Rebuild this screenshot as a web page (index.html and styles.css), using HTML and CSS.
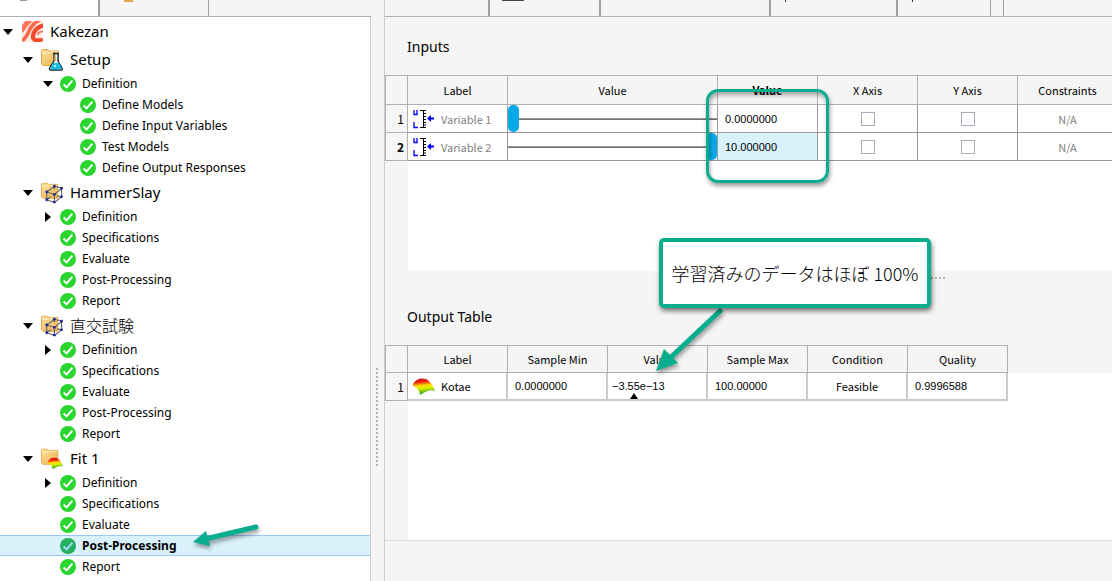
FILE: index.html
```html
<!DOCTYPE html>
<html lang="en">
<head>
<meta charset="utf-8">
<title>Kakezan</title>
<link rel="stylesheet" href="styles.css">
</head>
<body>
<svg class="defs" aria-hidden="true">
  <defs>
    <linearGradient id="gFolder" x1="0" y1="0" x2="1" y2="1"><stop offset="0" stop-color="#ffe2a0"/><stop offset="1" stop-color="#eab14a"/></linearGradient>
    <linearGradient id="gSurf" x1="0.4" y1="0" x2="0.55" y2="1"><stop offset="0" stop-color="#c81010"/><stop offset="0.2" stop-color="#f02010"/><stop offset="0.42" stop-color="#ffe000"/><stop offset="0.6" stop-color="#d0f000"/><stop offset="1" stop-color="#0c8a18"/></linearGradient>
    <clipPath id="rootClip"><rect width="20" height="20" rx="2"/></clipPath>
    <symbol id="down" viewBox="0 0 10 6"><path d="M0 0H10L5 6Z"/></symbol>
    <symbol id="right" viewBox="0 0 6 10"><path d="M0 0V10L6 5Z"/></symbol>
    <symbol id="check" viewBox="0 0 16 16"><circle cx="8" cy="8" r="8" fill="var(--disc)"/><path d="M3.6 8.6L6.6 11.4L12.4 4.6" fill="none" stroke="var(--tick)" stroke-width="2"/></symbol>
    <symbol id="folder" viewBox="0 0 22 22"><path d="M.5 3V1.500L2 .5H6.500L8 2H17.500V16.500H2L.5 15Z" fill="url(#gFolder)" stroke="#e0a64a"/><path d="M1 4H8L9.500 3H17" fill="none" stroke="#fff0c8"/></symbol>
    <symbol id="surface" viewBox="0 0 22 17"><path d="M0 6C3 1 8-.5 13 1C17 3 20 7 22 13C18 11 13 13 7 17C7 13 4 9 0 8Z" fill="url(#gSurf)"/></symbol>
    <symbol id="root" viewBox="0 0 20 20"><g clip-path="url(#rootClip)" fill="none"><rect width="20" height="20" fill="#ffe9e3"/><path d="M8-1Q3 3-1 10" stroke="#ff7358" stroke-width="4.500"/><path d="M17-1Q9 3 6 11Q4 16-1 20" stroke="#f9694c" stroke-width="3.500"/><path d="M21 4Q13 6 11 12Q9 18 14 18.500H21" stroke="#f4492c" stroke-width="4"/><path d="M21 10Q15 10 15 13" stroke="#f9694c" stroke-width="1.500"/></g></symbol>
    <symbol id="setup" viewBox="0 0 22 22"><use href="#folder"/><path d="M12 4.500H18M13 5V12L8.500 19Q8 21 10 21H20Q22 21 21 19L17 12V5" fill="#e9f2f4" stroke="#15242c" stroke-width="1.300"/><path d="M11.800 14H18L20.500 19Q21 20.500 19.500 20.500H11Q9 20.500 9.500 19Z" fill="#16bfe0"/><path d="M14 6V12" stroke="#c8a050" stroke-width="1.500"/><circle cx="14" cy="17" r="1" fill="#fff"/></symbol>
    <symbol id="doe" viewBox="0 0 23 22"><use href="#folder" width="22" height="22"/><path d="M6 10L14 4L22 6L14 12.500ZM6 10V18L14 21L21.500 15V6M14 12.500V21M14 4V7M6 18L10 15M21.500 15L17 14" fill="none" stroke="#66666f" stroke-width="1.200"/><g fill="#28289a"><circle cx="6" cy="10" r="1.500"/><circle cx="14" cy="4" r="1.500"/><circle cx="21.500" cy="6" r="1.500"/><circle cx="14" cy="12.500" r="1.500"/><circle cx="6" cy="18" r="1.500"/><circle cx="14" cy="20.500" r="1.500"/><circle cx="21.500" cy="15" r="1.500"/></g></symbol>
    <symbol id="fit" viewBox="0 0 23 22"><use href="#folder" width="22" height="22"/><use href="#surface" x="7" y="9" width="16" height="13"/></symbol>
    <symbol id="bounds" viewBox="0 0 22 20"><path d="M1 1V5.500H4V1M1 13V18.500H5" fill="none" stroke="#00f" stroke-width="1.300"/><path d="M7 1.500H13M7 18.500H13M10.500 1.500V18.500M10 4.500H13M10 7.500H13M10 10.500H13M10 13.500H13M10 16H13" fill="none" stroke="#000"/><path d="M14 9.500L18 6V8.500H21V10.500H18V13Z" fill="#00f"/></symbol>
  </defs>
</svg>
<div class="app">
  <aside class="side">
    <div class="tabs">
      <div class="tab on"><i class="mark grey"></i></div>
      <div class="tab files"><i class="mark gold"></i></div>
    </div>
    <nav class="tree" aria-label="Project">
      <div class="row group l0"><button class="tog" aria-label="Collapse Kakezan"><svg class="dn"><use href="#down"/></svg></button><svg class="rooticon"><use href="#root"/></svg><span>Kakezan</span></div>
      <div class="row group l1"><button class="tog" aria-label="Collapse Setup"><svg class="dn"><use href="#down"/></svg></button><svg class="gicon"><use href="#setup"/></svg><span>Setup</span></div>
      <div class="row l2"><button class="tog" aria-label="Collapse Definition"><svg class="dn"><use href="#down"/></svg></button><svg class="ok"><use href="#check"/></svg><span>Definition</span></div>
      <div class="row leaf l3"><svg class="ok"><use href="#check"/></svg><span>Define Models</span></div>
      <div class="row leaf l3"><svg class="ok"><use href="#check"/></svg><span>Define Input Variables</span></div>
      <div class="row leaf l3"><svg class="ok"><use href="#check"/></svg><span>Test Models</span></div>
      <div class="row leaf l3"><svg class="ok"><use href="#check"/></svg><span>Define Output Responses</span></div>

      <div class="row group l1"><button class="tog" aria-label="Collapse HammerSlay"><svg class="dn"><use href="#down"/></svg></button><svg class="gicon"><use href="#doe"/></svg><span>HammerSlay</span></div>
      <div class="row l2"><button class="tog" aria-label="Expand Definition"><svg class="rt"><use href="#right"/></svg></button><svg class="ok"><use href="#check"/></svg><span>Definition</span></div>
      <div class="row leaf l2"><svg class="ok"><use href="#check"/></svg><span>Specifications</span></div>
      <div class="row leaf l2"><svg class="ok"><use href="#check"/></svg><span>Evaluate</span></div>
      <div class="row leaf l2"><svg class="ok"><use href="#check"/></svg><span>Post-Processing</span></div>
      <div class="row leaf l2"><svg class="ok"><use href="#check"/></svg><span>Report</span></div>

      <div class="row group l1"><button class="tog" aria-label="Collapse 直交試験"><svg class="dn"><use href="#down"/></svg></button><svg class="gicon"><use href="#doe"/></svg><span lang="ja">直交試験</span></div>
      <div class="row l2"><button class="tog" aria-label="Expand Definition"><svg class="rt"><use href="#right"/></svg></button><svg class="ok"><use href="#check"/></svg><span>Definition</span></div>
      <div class="row leaf l2"><svg class="ok"><use href="#check"/></svg><span>Specifications</span></div>
      <div class="row leaf l2"><svg class="ok"><use href="#check"/></svg><span>Evaluate</span></div>
      <div class="row leaf l2"><svg class="ok"><use href="#check"/></svg><span>Post-Processing</span></div>
      <div class="row leaf l2"><svg class="ok"><use href="#check"/></svg><span>Report</span></div>

      <div class="row group l1"><button class="tog" aria-label="Collapse Fit 1"><svg class="dn"><use href="#down"/></svg></button><svg class="gicon"><use href="#fit"/></svg><span>Fit 1</span></div>
      <div class="row l2"><button class="tog" aria-label="Expand Definition"><svg class="rt"><use href="#right"/></svg></button><svg class="ok"><use href="#check"/></svg><span>Definition</span></div>
      <div class="row leaf l2"><svg class="ok"><use href="#check"/></svg><span>Specifications</span></div>
      <div class="row leaf l2"><svg class="ok"><use href="#check"/></svg><span>Evaluate</span></div>
      <div class="row leaf l2 selected"><svg class="ok"><use href="#check"/></svg><span>Post-Processing</span></div>
      <div class="row leaf l2"><svg class="ok"><use href="#check"/></svg><span>Report</span></div>
    </nav>
  </aside>
  <div class="splitter"><i class="vdots"></i></div>
  <main class="main">
    <div class="tabs">
      <div class="mtab w1"></div><div class="mtab w2"><i class="mark dark"></i></div><div class="mtab w3"></div><div class="mtab w4"><i class="mark dot"></i></div><div class="mtab w5"><i class="mark dot"></i></div><div class="mtab w6"></div>
    </div>
    <section class="panel inputs">
      <h2>Inputs</h2>
      <div class="body">
        <table class="grid">
          <colgroup><col class="c-num"><col class="c-label"><col class="c-slider"><col class="c"><col class="c"><col class="c"><col class="c"></colgroup>
          <thead><tr><th></th><th>Label</th><th>Value</th><th class="strong">Value</th><th>X Axis</th><th>Y Axis</th><th>Constraints</th></tr></thead>
          <tbody>
            <tr><th>1</th><td class="name dim"><div><svg class="vicon"><use href="#bounds"/></svg>Variable 1</div></td><td class="slide"><input type="range" min="0" max="10" value="0" aria-label="Variable 1 value"></td><td class="num">0.0000000</td><td><input type="checkbox" aria-label="Variable 1 X axis"></td><td><input type="checkbox" aria-label="Variable 1 Y axis"></td><td class="dim">N/A</td></tr>
            <tr><th class="strong">2</th><td class="name dim"><div><svg class="vicon"><use href="#bounds"/></svg>Variable 2</div></td><td class="slide"><input type="range" min="0" max="10" value="10" aria-label="Variable 2 value"></td><td class="num cur">10.000000</td><td><input type="checkbox" aria-label="Variable 2 X axis"></td><td><input type="checkbox" aria-label="Variable 2 Y axis"></td><td class="dim">N/A</td></tr>
          </tbody>
        </table>
      </div>
    </section>
    <div class="hsplit"><i class="hdots"></i></div>
    <section class="panel outputs">
      <h2>Output Table</h2>
      <div class="body">
        <table class="grid out">
          <colgroup><col class="c-num"><col class="c-label"><col class="c"><col class="c"><col class="c"><col class="c"><col class="c"></colgroup>
          <thead><tr><th></th><th>Label</th><th>Sample Min</th><th>Value</th><th>Sample Max</th><th>Condition</th><th>Quality</th></tr></thead>
          <tbody>
            <tr><th>1</th><td class="name"><div><svg class="sicon"><use href="#surface"/></svg>Kotae</div></td><td class="num">0.0000000</td><td class="num marked">−3.55e−13<svg class="pointer" viewBox="0 0 8 6"><path d="M0 6L4 0L8 6Z"/></svg></td><td class="num">100.00000</td><td>Feasible</td><td class="num">0.9996588</td></tr>
          </tbody>
        </table>
      </div>
    </section>
  </main>
  <div class="frame"></div>
  <svg class="arrow a1" viewBox="0 0 80 80"><path d="M69 7L18 55" stroke="#08ad8e" stroke-width="5" stroke-linecap="round"/><path d="M5 67L13 45L27 59Z" fill="#08ad8e"/></svg>
  <svg class="arrow a2" viewBox="0 0 80 40"><path d="M65 9L14 21" stroke="#08ad8e" stroke-width="5" stroke-linecap="round"/><path d="M2 24L15 13L19 28Z" fill="#08ad8e"/></svg>
  <div class="callout" lang="ja">学習済みのデータはほぼ 100%</div>
</div>
</body>
</html>
```

FILE: styles.css
```css
* { box-sizing: border-box; }
body { margin: 0; background: #f5f5f5; color: #000; font: 12px/20px "Noto Sans", "Noto Sans CJK JP", sans-serif; }
h2 { margin: 0; font-size: 14px; font-weight: 400; line-height: 20px; }
svg { display: block; flex: none; }
.defs { position: absolute; width: 0; height: 0; }
.app { position: relative; display: flex; min-height: 100vh; overflow: hidden; --teal: #08ad8e; }

.side { flex: 0 0 371px; display: flex; flex-direction: column; }
.tabs { display: flex; height: 17px; background: #f5f5f5; border-bottom: 1px solid #b0b0b0; }
.tab { width: 100px; border-right: 2px solid #a0a0a0; }
.tab.on { background: #fff; }
.tab.files { width: 109px; border-right-width: 1px; }
.mark { display: block; height: 1px; }
.mark.grey { width: 7px; margin-left: 20px; background: #999; }
.mark.gold { width: 9px; height: 2px; margin-left: 24px; background: #dfa64a; }
.mark.dark { width: 22px; margin-left: 12px; background: #444; }
.mark.dot { width: 1px; height: 2px; margin-left: 14px; background: #333; }

.tree { flex: 1; background: #fff; border-right: 1px solid #ccc; }
.row { --disc: #2bd52f; --tick: #fff; display: flex; align-items: center; height: 21px; gap: 6px; font-size: 12px; line-height: 21px; white-space: nowrap; }
.row.group { height: 28px; font-size: 15px; gap: 7px; padding-top: 1px; }
.row span:lang(ja) { font-family: "Noto Sans CJK JP", sans-serif; font-size: 16px; font-weight: 300; }
.l1 { padding-left: 20px; }
.l2 { padding-left: 40px; }
.leaf.l2 { padding-left: 60px; }
.leaf.l3 { padding-left: 80px; }
.tog { display: flex; flex: none; width: 20px; height: 16px; margin-right: -6px; padding: 0 0 0 3px; border: 0; background: none; align-items: center; }
.dn { width: 10px; height: 6px; }
.rt { width: 6px; height: 10px; margin-left: 2px; }
.ok { width: 16px; height: 16px; }
.rooticon { width: 21px; height: 21px; }
.gicon { width: 22px; height: 22px; }
.l0 .rooticon { margin-left: 1px; }
.row.selected { background: #d9f1fb; border: solid #99c9f5; border-width: 1px 0; font-weight: 700; --disc: #24b161; --tick: #a8d8f5; }

.splitter { flex: 0 0 13px; padding: 368px 0 0 5px; }
.vdots { display: block; width: 2px; height: 98px; background: repeating-linear-gradient(#b5b5a5 0 2px, #f5f5f5 2px 4px); }

.main { flex: 1; min-width: 0; border-left: 1px solid #ccc; }
.mtab { border-right: 2px solid #a0a0a0; flex: none; }
.w1 { width: 105px; }
.w2 { width: 111px; }
.w3 { width: 170px; }
.w4 { width: 127px; }
.w5 { width: 93px; border-right-width: 1px; }
.w6 { width: 13px; border-right-width: 1px; }
.panel h2 { padding: 20px 22px 18px; }
.body { --edge: linear-gradient(#f5f5f5, #f5f5f5); overflow: hidden; min-height: 196px; background: var(--edge) 0 0 / 23px 100% no-repeat, var(--edge) 0 0 / 100% 28px no-repeat, #fff; }
.inputs .body { border-top: 1px solid #b0b0b0; }
.outputs .body { border-bottom: 1px solid #ddd; }
.hsplit { height: 16px; padding: 6px 0 0 462px; }
.hdots { display: block; width: 100px; height: 2px; background: repeating-linear-gradient(90deg, #b5b5a5 0 2px, #f5f5f5 2px 4px); }

.grid { table-layout: fixed; width: 732px; border-collapse: separate; border-spacing: 0; border-left: 1px solid #b0b0b0; font-family: "Noto Sans CJK JP", sans-serif; font-size: 11px; }
.c-num { width: 22px; }
.c-label, .c { width: 100px; }
.c-slider { width: 210px; }
.grid th, .grid td { height: 28px; padding: 0; text-align: center; font-weight: 400; line-height: 16px; border-right: 1px solid #999; border-bottom: 1px solid #999; background: #fff; }
.grid th { background: #f5f5f5; border-color: #b0b0b0; }
.grid thead th { height: 29px; }
.grid tbody th { text-align: right; padding-right: 3px; font-size: 12px; }
.grid .strong { font-weight: 700; }
.grid .dim { color: #808080; }
.grid .num { text-align: left; padding-left: 7px; font-family: "Liberation Sans", sans-serif; }
.grid .cur { background: #d9f1fb; }
.name div { display: flex; align-items: center; gap: 6px; padding-left: 5px; }
.vicon { width: 22px; height: 20px; }
.sicon { width: 22px; height: 17px; }
.grid input { display: block; margin: 0 auto; appearance: none; }
input[type=checkbox] { width: 14px; height: 14px; background: #fff; border: 1px solid #a9afbc; }
input[type=range] { width: 100%; height: 27px; background: linear-gradient(#a8a8a8, #606060) center / 100% 2px no-repeat; }
input[type=range]::-webkit-slider-thumb { appearance: none; width: 11px; height: 27px; border-radius: 5px; background: #05a8e8; }

.grid.out { width: 623px; }
.grid.out thead th { height: 28px; border-top: 1px solid #b0b0b0; }
.grid.out tbody td { border-right: 2px solid #ccc; border-bottom: 2px solid #ccc; }
.grid.out .marked { position: relative; padding-left: 4px; }
.pointer { position: absolute; left: 22px; bottom: 0; width: 8px; height: 6px; }

.frame { position: absolute; left: 706px; top: 89px; width: 123px; height: 94px; border: 3px solid var(--teal); border-radius: 12px; box-shadow: 1px 3px 4px #0006, inset 1px 3px 4px #0005; }
.callout { position: absolute; left: 659px; top: 238px; width: 272px; height: 70px; display: flex; align-items: center; justify-content: center; border: 4px solid var(--teal); border-radius: 5px; background: #fff; box-shadow: 1px 3px 5px #0008; font: 300 18px/24px "Noto Sans CJK JP", sans-serif; white-space: nowrap; }
.arrow { position: absolute; filter: drop-shadow(1px 3px 2px #0006); }
.a1 { left: 651px; top: 304px; width: 80px; height: 80px; }
.a2 { left: 191px; top: 518px; width: 80px; height: 40px; }
```
